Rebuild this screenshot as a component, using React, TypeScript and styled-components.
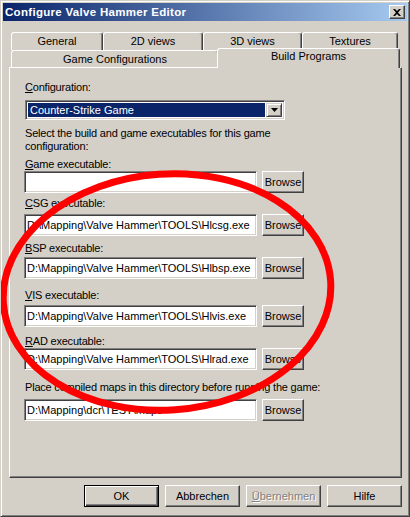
import React from 'react';
import styled, { createGlobalStyle, css } from 'styled-components';

const GlobalStyle = createGlobalStyle`
  html, body { margin: 0; padding: 0; background: #d4d0c8; }
  body { font-family: "Liberation Sans", Arial, sans-serif; font-size: 11px; }
`;

const FONT = `"Liberation Sans", Arial, sans-serif`;

const Window = styled.div`
  position: relative;
  box-sizing: border-box;
  width: 410px;
  height: 517px;
  background: #d4d0c8;
  border: 1px solid;
  border-color: #d4d0c8 #404040 #404040 #d4d0c8;
  box-shadow: inset 1px 1px #ffffff, inset -1px -1px #808080;
  padding: 2px;
  display: flex;
  flex-direction: column;
  font-family: ${FONT};
  font-size: 11px;
  color: #000;
`;

const TitleBar = styled.div`
  height: 18px;
  display: flex;
  align-items: center;
  justify-content: space-between;
  padding: 0 2px 0 2px;
  background: linear-gradient(to right, #0a246a, #a6caf0);
`;

const TitleText = styled.span`
  color: #fff;
  font-weight: bold;
  font-size: 11.5px;
  letter-spacing: 0.3px;
`;

const CloseButton = styled.div`
  box-sizing: border-box;
  width: 16px;
  height: 14px;
  background: #d4d0c8;
  border: 1px solid;
  border-color: #ffffff #404040 #404040 #ffffff;
  box-shadow: inset -1px -1px #808080;
  display: flex;
  align-items: center;
  justify-content: center;
`;

const Body = styled.div`
  display: flex;
  flex-direction: column;
  padding: 11px 5px 0 6px;
`;

const TabStrip = styled.div`
  display: flex;
  flex-direction: column;
  padding: 0 2px;
`;

const TabRow = styled.div<{ $h: number }>`
  display: flex;
  height: ${(p) => p.$h}px;
  align-items: flex-end;
`;

const Tab = styled.div<{ $w: number; $selected?: boolean }>`
  box-sizing: border-box;
  width: ${(p) => p.$w}px;
  height: 100%;
  background: #d4d0c8;
  border-top: 1px solid #ffffff;
  border-left: 1px solid #ffffff;
  border-right: 1px solid #404040;
  box-shadow: inset -1px 0 #808080;
  border-radius: 3px 3px 0 0;
  display: flex;
  justify-content: center;
  padding-top: 2px;
  line-height: 13px;
  ${(p) =>
    p.$selected &&
    css`
      position: relative;
      z-index: 2;
      width: ${p.$w + 4}px;
      height: calc(100% + 3px);
      margin: 0 -2px -1px -2px;
      padding-top: 1px;
    `}
`;

const Panel = styled.div`
  box-sizing: border-box;
  height: 411px;
  background: #d4d0c8;
  border: 1px solid;
  border-color: #ffffff #404040 #404040 #ffffff;
  box-shadow: inset -1px -1px #808080;
  padding: 13px 15px 0 15px;
  display: flex;
  flex-direction: column;
`;

const Label = styled.div<{ $mt?: number }>`
  line-height: 13px;
  margin-top: ${(p) => p.$mt ?? 0}px;
  white-space: nowrap;
  letter-spacing: -0.2px;
`;

const U = styled.span`
  text-decoration: underline;
  text-underline-offset: 1px;
`;

const Combo = styled.div`
  box-sizing: border-box;
  width: 260px;
  height: 20px;
  margin-top: 6px;
  background: #ffffff;
  border: 1px solid;
  border-color: #808080 #ffffff #ffffff #808080;
  box-shadow: inset 1px 1px #404040, inset -1px -1px #d4d0c8;
  padding: 2px;
  display: flex;
`;

const ComboValue = styled.div`
  flex: 1;
  background: #0a246a;
  color: #ffffff;
  line-height: 14px;
  padding-left: 2px;
  margin-right: 1px;
`;

const DropButton = styled.div`
  box-sizing: border-box;
  width: 16px;
  height: 14px;
  background: #d4d0c8;
  border: 1px solid;
  border-color: #d4d0c8 #404040 #404040 #d4d0c8;
  box-shadow: inset 1px 1px #ffffff, inset -1px -1px #808080;
  display: flex;
  align-items: center;
  justify-content: center;
`;

const FieldRow = styled.div<{ $mt?: number }>`
  display: flex;
  gap: 5px;
  margin-top: ${(p) => p.$mt ?? 0}px;
  margin-left: -1px;
`;

const TextInput = styled.div`
  box-sizing: border-box;
  width: 233px;
  height: 22px;
  background: #ffffff;
  border: 1px solid;
  border-color: #808080 #ffffff #ffffff #808080;
  box-shadow: inset 1px 1px #404040, inset -1px -1px #d4d0c8;
  padding: 0 2px;
  line-height: 20px;
  white-space: nowrap;
  overflow: hidden;
`;

const Button = styled.div<{ $w: number; $h: number; $default?: boolean; $disabled?: boolean }>`
  box-sizing: border-box;
  width: ${(p) => p.$w}px;
  height: ${(p) => p.$h}px;
  background: #d4d0c8;
  border: 1px solid;
  border-color: #ffffff #404040 #404040 #ffffff;
  box-shadow: inset -1px -1px #808080;
  display: flex;
  align-items: center;
  justify-content: center;
  ${(p) =>
    p.$default &&
    css`
      border: 1px solid #000000;
      box-shadow: inset 1px 1px #ffffff, inset -1px -1px #404040, inset -2px -2px #808080;
    `}
  ${(p) =>
    p.$disabled &&
    css`
      color: #808080;
      text-shadow: 1px 1px #ffffff;
    `}
`;

const ButtonBar = styled.div`
  display: flex;
  justify-content: flex-end;
  gap: 6px;
  margin-top: 7px;
`;

const Overlay = styled.svg`
  position: absolute;
  left: 0;
  top: 0;
  pointer-events: none;
`;

const fields: { label: React.ReactNode; value: string; lt: number; rt: number }[] = [
  { label: <><U>G</U>ame executable:</>, value: '', lt: 5, rt: 0 },
  { label: <><U>C</U>SG executable:</>, value: 'D:\\Mapping\\Valve Hammer\\TOOLS\\Hlcsg.exe', lt: 4, rt: 4 },
  { label: <><U>B</U>SP executable:</>, value: 'D:\\Mapping\\Valve Hammer\\TOOLS\\Hlbsp.exe', lt: 6, rt: 2 },
  { label: <><U>V</U>IS executable:</>, value: 'D:\\Mapping\\Valve Hammer\\TOOLS\\Hlvis.exe', lt: 10, rt: 3 },
  { label: <><U>R</U>AD executable:</>, value: 'D:\\Mapping\\Valve Hammer\\TOOLS\\Hlrad.exe', lt: 8, rt: 0 },
  { label: <>Place compiled maps in this directory before running the game:</>, value: 'D:\\Mapping\\dcr\\TEST\\maps', lt: 11, rt: 5 },
];

export default function App() {
  return (
    <>
      <GlobalStyle />
      <Window>
        <TitleBar>
          <TitleText>Configure Valve Hammer Editor</TitleText>
          <CloseButton>
            <svg width="8" height="7" viewBox="0 0 8 7">
              <path d="M0 0h2l2 2 2-2h2L5 3.5 8 7H6L4 5 2 7H0l3-3.5z" fill="#000" />
            </svg>
          </CloseButton>
        </TitleBar>
        <Body>
          <TabStrip>
            <TabRow $h={18}>
              <Tab $w={92}>General</Tab>
              <Tab $w={100}>2D views</Tab>
              <Tab $w={99}>3D views</Tab>
              <Tab $w={96}>Textures</Tab>
            </TabRow>
            <TabRow $h={17}>
              <Tab $w={208}>Game Configurations</Tab>
              <Tab $w={179} $selected>Build Programs</Tab>
            </TabRow>
          </TabStrip>
          <Panel>
            <Label>
              <U>C</U>onfiguration:
            </Label>
            <Combo>
              <ComboValue>Counter-Strike Game</ComboValue>
              <DropButton>
                <svg width="7" height="4" viewBox="0 0 7 4">
                  <path d="M0 0h7L3.5 4z" fill="#000" />
                </svg>
              </DropButton>
            </Combo>
            <Label $mt={7}>
              Select the build and game executables for this game
              <br />
              configuration:
            </Label>
            {fields.map((f, i) => (
              <React.Fragment key={i}>
                <Label $mt={f.lt}>{f.label}</Label>
                <FieldRow $mt={f.rt}>
                  <TextInput>{f.value}</TextInput>
                  <Button $w={42} $h={22}>Browse</Button>
                </FieldRow>
              </React.Fragment>
            ))}
          </Panel>
          <ButtonBar>
            <Button $w={75} $h={22} $default>OK</Button>
            <Button $w={75} $h={22}>Abbrechen</Button>
            <Button $w={75} $h={22} $disabled>
              <U>Ü</U>bernehmen
            </Button>
            <Button $w={75} $h={22}>Hilfe</Button>
          </ButtonBar>
        </Body>
        <Overlay width="410" height="517" viewBox="0 0 410 517">
          <ellipse
            cx="166"
            cy="291"
            rx="164"
            ry="118"
            transform="rotate(-4 166 291)"
            fill="none"
            stroke="#f00"
            strokeWidth="7"
          />
        </Overlay>
      </Window>
    </>
  );
}
